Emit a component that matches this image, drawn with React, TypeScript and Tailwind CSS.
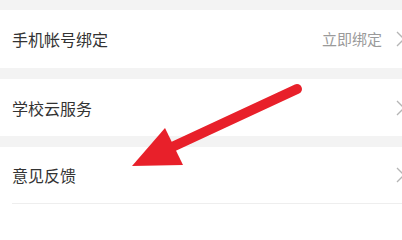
import React from "react";

const Chevron = () => (
  <svg width="10" height="16" viewBox="0 0 10 16" className="shrink-0">
    <path d="M1 1 L8 8 L1 15" fill="none" stroke="#b5b5b5" strokeWidth="1.3" />
  </svg>
);

const Row = ({ label, right, h }: { label: string; right?: string; h: string }) => (
  <div className={`flex items-center bg-white pl-3 ${h}`}>
    <span className="flex-1 text-[16px] text-[#333333]">{label}</span>
    {right && <span className="mr-[14px] text-[15px] text-[#9a9a9a]">{right}</span>}
    <div className="w-[6px] overflow-visible">
      <Chevron />
    </div>
  </div>
);

export default function App() {
  return (
    <div
      className="relative h-[219px] w-[402px] overflow-hidden bg-white"
      style={{ fontFamily: '"Noto Sans CJK SC", "Noto Sans", sans-serif' }}
    >
      <div className="h-[10px] bg-[#f3f3f3]" />
      <Row label="手机帐号绑定" right="立即绑定" h="h-[58px]" />
      <div className="h-[11px] bg-[#f3f3f3]" />
      <Row label="学校云服务" h="h-[57px]" />
      <div className="h-[11px] bg-[#f3f3f3]" />
      <Row label="意见反馈" h="h-[56px]" />
      <div className="ml-3 h-px bg-[#eeeeee]" />
      <svg className="pointer-events-none absolute left-0 top-0" width="402" height="219" viewBox="0 0 402 219">
        <line x1="297" y1="89" x2="170" y2="148" stroke="#e8202a" strokeWidth="10" strokeLinecap="round" />
        <polygon points="132,166 165,128 183,165" fill="#e8202a" />
      </svg>
    </div>
  );
}
